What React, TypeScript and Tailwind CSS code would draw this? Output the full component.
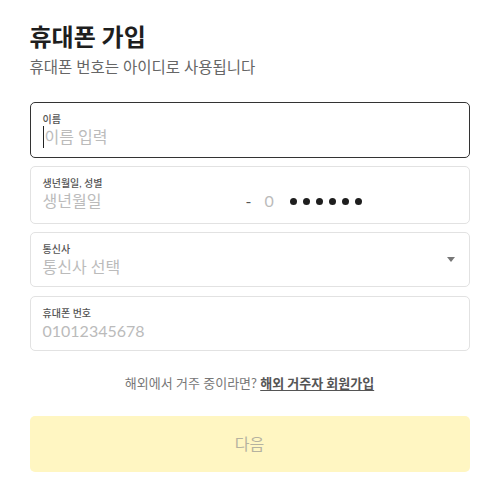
import React from "react";

const font = { fontFamily: '"Lato", "Noto Sans CJK KR", sans-serif' };

function Field({
  label,
  focused,
  className,
  children,
}: {
  label: string;
  focused?: boolean;
  className?: string;
  children: React.ReactNode;
}) {
  return (
    <div
      className={`relative flex flex-col rounded-[5px] border px-3 pt-[9px] ${
        focused ? "border-[#333333]" : "border-[#e2e2e2]"
      } ${className ?? "h-[56px]"}`}
    >
      <span className="text-[10px] leading-[14px] font-medium text-[#555555]">{label}</span>
      {children}
    </div>
  );
}

export default function App() {
  return (
    <div className="min-h-screen bg-white text-[#222222]" style={font}>
      <div className="mx-auto w-[440px] pt-[21px]">
        <h1 className="text-[24px] leading-[32px] font-bold text-[#1e1e1e]">휴대폰 가입</h1>
        <p className="mt-[3px] text-[15.5px] leading-[22px] text-[#666666]">휴대폰 번호는 아이디로 사용됩니다</p>

        <div className="mt-[24px] flex flex-col">
          <Field label="이름" focused className="h-[56px]">
            <div className="flex items-center text-[16px] leading-[22px] text-[#bbbbbb]">
              <span className="mr-px h-[22px] w-px bg-[#222222]" />
              이름 입력
            </div>
          </Field>

          <Field label="생년월일, 성별" className="mt-[8px] h-[58px]">
            <div className="flex items-center text-[16px] leading-[22px] text-[#bbbbbb]">
              <span className="w-[203px]">생년월일</span>
              <span className="w-[19px] text-[#555555]">-</span>
              <span className="w-[25px]">0</span>
              <span className="flex gap-[6px]">
                {[0, 1, 2, 3, 4, 5].map((i) => (
                  <span key={i} className="h-[7px] w-[7px] rounded-full bg-[#1e1e1e]" />
                ))}
              </span>
            </div>
          </Field>

          <Field label="통신사" className="mt-[8px] h-[55px]">
            <div className="text-[16px] leading-[22px] text-[#bbbbbb]">통신사 선택</div>
            <svg
              className="absolute right-[14px] top-[24px]"
              width="8"
              height="5"
              viewBox="0 0 8 5"
            >
              <path d="M0 0h8L4 5z" fill="#777777" />
            </svg>
          </Field>

          <Field label="휴대폰 번호" className="mt-[9px] h-[55px]">
            <div className="text-[16px] leading-[22px] text-[#bbbbbb]">01012345678</div>
          </Field>
        </div>

        <p className="mt-[22px] text-center text-[13px] leading-[20px] text-[#777777]">
          해외에서 거주 중이라면?{" "}
          <a className="font-bold text-[#555555] underline underline-offset-2">해외 거주자 회원가입</a>
        </p>

        <button
          type="button"
          className="mt-[23px] flex h-[56px] w-full items-center justify-center rounded-[5px] bg-[#fff6c2] text-[16px] text-[#b5b2a0]"
        >
          다음
        </button>
      </div>
    </div>
  );
}
